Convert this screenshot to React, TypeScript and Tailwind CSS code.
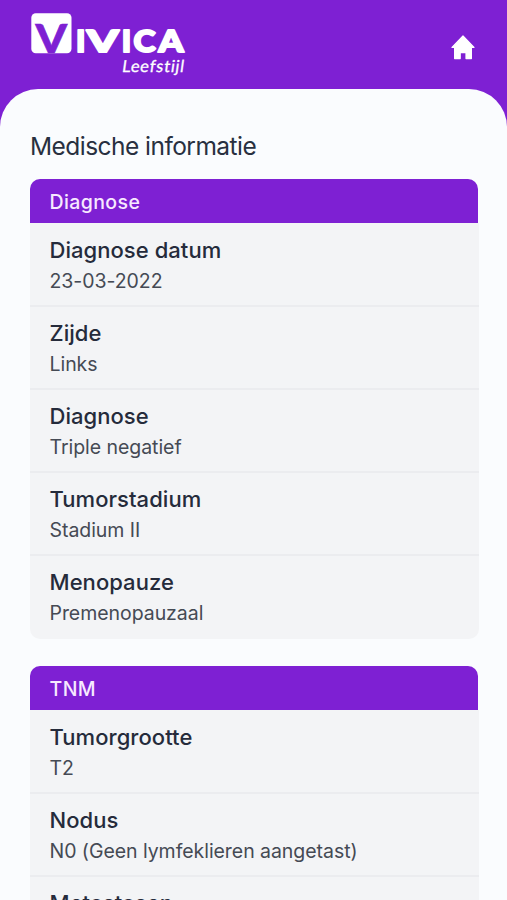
interface Item {
  label: string;
  value: string;
}

const diagnose: Item[] = [
  { label: "Diagnose datum", value: "23-03-2022" },
  { label: "Zijde", value: "Links" },
  { label: "Diagnose", value: "Triple negatief" },
  { label: "Tumorstadium", value: "Stadium II" },
  { label: "Menopauze", value: "Premenopauzaal" },
];

const tnm: Item[] = [
  { label: "Tumorgrootte", value: "T2" },
  { label: "Nodus", value: "N0 (Geen lymfeklieren aangetast)" },
  { label: "Metastasen", value: "M0" },
];

function Logo() {
  return (
    <svg width="160" height="70" viewBox="28 10 160 70" role="img" aria-label="Vivica Leefstijl">
      <rect x="31.3" y="13.2" width="40.2" height="40" rx="4.5" fill="#fff" />
      <g fontFamily="Lato, sans-serif" fontWeight="900">
        <text x="35.6" y="52.6" fontSize="40.5" fill="#7e20d3" stroke="#7e20d3" strokeWidth="0.6" textLength="31.6" lengthAdjust="spacingAndGlyphs">V</text>
        <g fontSize="31" fill="#fff" stroke="#fff" strokeWidth="2" strokeLinejoin="round">
          <text x="76" y="52">I</text>
          <text x="87" y="52" textLength="31.5" lengthAdjust="spacingAndGlyphs">V</text>
          <text x="121.8" y="52">I</text>
          <text x="133.6" y="52" textLength="22" lengthAdjust="spacingAndGlyphs">C</text>
          <text x="158.5" y="52" textLength="25" lengthAdjust="spacingAndGlyphs">A</text>
        </g>
      </g>
      <g transform="translate(121.5 71.6) skewX(-8)">
        <text fontSize="16.5" fill="#fff" stroke="#fff" strokeWidth="0.3" fontFamily="Lato, sans-serif" fontWeight="400" textLength="62" lengthAdjust="spacing" style={{ fontVariantLigatures: "none" }}>Leefstijl</text>
      </g>
    </svg>
  );
}

function HomeIcon() {
  return (
    <svg width="24" height="25" viewBox="0 0 24 25" fill="#fff" stroke="#fff" strokeWidth="1.2" strokeLinejoin="round" aria-hidden="true">
      <path d="M12 1 L23 12.4 H20.4 V23.6 H15 V17.6 H9.2 V23.6 H3.6 V12.4 H1 Z" />
    </svg>
  );
}

function Card({ title, items }: { title: string; items: Item[] }) {
  return (
    <section className="mb-[27px]">
      <h2 className="flex h-[44px] w-[448px] items-center rounded-t-[10px] bg-[#7e20d3] pl-[19.5px] pt-[3px] text-[19.5px] font-medium tracking-[0.4px] text-[#f7e9ff]">
        {title}
      </h2>
      <dl className="w-[449px] overflow-hidden rounded-b-[10px] bg-[#f3f4f6]">
        {items.map((item) => (
          <div key={item.label} className="h-[83px] border-b-2 border-[#ebecef] pl-[19.5px] first:h-[84px] first:pt-[11px] not-first:pt-[10px] last:border-b-0">
            <dt className="text-[22px] font-medium leading-[32px] tracking-[0.05px] text-[#252b3b]">{item.label}</dt>
            <dd className="text-[19.5px] leading-[31px] tracking-[-0.05px] text-[#454a54]">{item.value}</dd>
          </div>
        ))}
      </dl>
    </section>
  );
}

export default function App() {
  return (
    <div className="h-[900px] w-[507px] overflow-hidden bg-[#7e20d3] font-['Inter',sans-serif]">
      <header className="flex h-[89px] items-start justify-between pl-[28px] pr-[32px] pt-[10px]">
        <Logo />
        <button aria-label="Home" className="mt-[25px]">
          <HomeIcon />
        </button>
      </header>
      <main className="h-[811px] overflow-hidden rounded-t-[38px] bg-[#fafcfe] pl-[30px] pt-[39px]">
        <h1 className="mb-[15px] text-[24.5px] leading-[36px] tracking-[-0.54px] text-[#283040]">Medische informatie</h1>
        <Card title="Diagnose" items={diagnose} />
        <Card title="TNM" items={tnm} />
      </main>
    </div>
  );
}
